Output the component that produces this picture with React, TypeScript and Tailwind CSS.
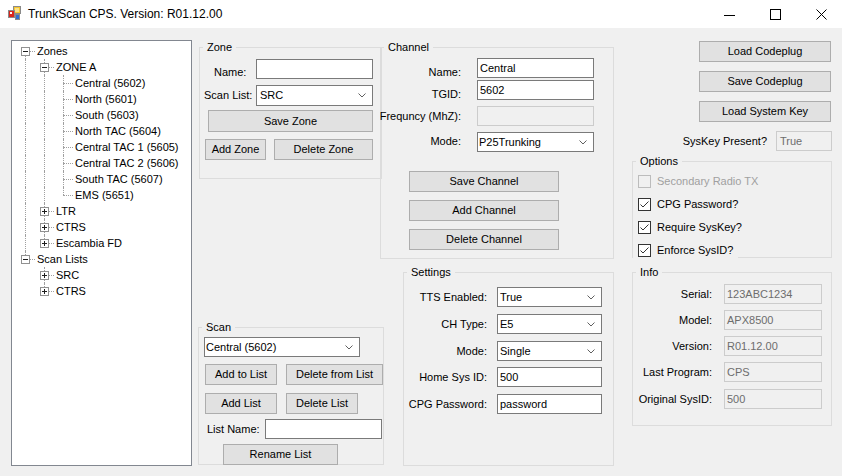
import React from "react";
import clsx from "clsx";

type TreeRow = {
  text: string;
  level: number;
  box?: "+" | "-";
  up: boolean;
  down: boolean;
  pipes: boolean[];
};

const treeRows: TreeRow[] = [
  { text: "Zones", level: 0, box: "-", up: false, down: true, pipes: [] },
  { text: "ZONE A", level: 1, box: "-", up: true, down: true, pipes: [true] },
  { text: "Central (5602)", level: 2, up: true, down: true, pipes: [true, true] },
  { text: "North (5601)", level: 2, up: true, down: true, pipes: [true, true] },
  { text: "South (5603)", level: 2, up: true, down: true, pipes: [true, true] },
  { text: "North TAC (5604)", level: 2, up: true, down: true, pipes: [true, true] },
  { text: "Central TAC 1 (5605)", level: 2, up: true, down: true, pipes: [true, true] },
  { text: "Central TAC 2 (5606)", level: 2, up: true, down: true, pipes: [true, true] },
  { text: "South TAC (5607)", level: 2, up: true, down: true, pipes: [true, true] },
  { text: "EMS (5651)", level: 2, up: true, down: false, pipes: [true, true] },
  { text: "LTR", level: 1, box: "+", up: true, down: true, pipes: [true] },
  { text: "CTRS", level: 1, box: "+", up: true, down: true, pipes: [true] },
  { text: "Escambia FD", level: 1, box: "+", up: true, down: false, pipes: [true] },
  { text: "Scan Lists", level: 0, box: "-", up: true, down: false, pipes: [] },
  { text: "SRC", level: 1, box: "+", up: true, down: true, pipes: [false] },
  { text: "CTRS", level: 1, box: "+", up: true, down: false, pipes: [false] },
];

function TreeLine({ row }: { row: TreeRow }) {
  return (
    <div className="flex h-[16px] items-center">
      {row.pipes.map((p, i) => (
        <div key={i} className="relative h-[16px] w-[19px]">
          {p && <div className="absolute left-[9px] top-0 bottom-0 border-l border-dotted border-[#a0a0a0]" />}
        </div>
      ))}
      <div className="relative h-[16px] w-[19px]">
        {row.up && <div className="absolute left-[9px] top-0 h-[8px] border-l border-dotted border-[#a0a0a0]" />}
        {row.down && <div className="absolute left-[9px] top-[8px] bottom-0 border-l border-dotted border-[#a0a0a0]" />}
        <div className="absolute left-[9px] right-0 top-[8px] border-t border-dotted border-[#a0a0a0]" />
        {row.box && (
          <div className="absolute left-[5px] top-[4px] flex h-[9px] w-[9px] items-center justify-center border border-[#919191] bg-white">
            <svg width="7" height="7" viewBox="0 0 7 7">
              <path d="M1 3.5H6" stroke="#1e1e1e" strokeWidth="1" />
              {row.box === "+" && <path d="M3.5 1V6" stroke="#1e1e1e" strokeWidth="1" />}
            </svg>
          </div>
        )}
      </div>
      <span className="ml-[2px] whitespace-nowrap leading-[16px]">{row.text}</span>
    </div>
  );
}

function Btn({ children, className }: { children: React.ReactNode; className?: string }) {
  return (
    <button
      type="button"
      className={clsx(
        "flex shrink-0 items-center justify-center whitespace-nowrap border border-[#adadad] bg-[#e1e1e1] leading-none text-black",
        className
      )}
    >
      {children}
    </button>
  );
}

function TextBox({ value, className, disabled }: { value?: string; className?: string; disabled?: boolean }) {
  return (
    <div
      className={clsx(
        "flex h-[20px] shrink-0 items-center border pl-[2px] leading-none",
        disabled ? "border-[#cccccc] bg-[#f0f0f0] text-[#6d6d6d]" : "border-[#7a7a7a] bg-white text-black",
        className
      )}
    >
      {value}
    </div>
  );
}

function Combo({ value, className }: { value: string; className?: string }) {
  return (
    <div
      className={clsx(
        "flex h-[20px] shrink-0 items-center border border-[#7a7a7a] bg-white leading-none text-black",
        className
      )}
    >
      <span>{value}</span>
      <svg className="ml-auto mr-[6px]" width="8" height="5" viewBox="0 0 8 5">
        <path d="M0.5 0.5L4 4L7.5 0.5" fill="none" stroke="#606060" strokeWidth="1" />
      </svg>
    </div>
  );
}

function Group({ title, className, children }: { title: string; className?: string; children: React.ReactNode }) {
  return (
    <fieldset className={clsx("shrink-0 border border-[#dcdcdc]", className)}>
      <legend className="ml-[3px] px-[4px] leading-[13px]">{title}</legend>
      {children}
    </fieldset>
  );
}

function Check({ label, checked, disabled, className }: { label: string; checked?: boolean; disabled?: boolean; className?: string }) {
  return (
    <div className={clsx("flex h-[23px] w-fit items-center bg-[#f0f0f0] pl-[5px] pr-[5px]", className)}>
      <div
        className={clsx(
          "flex h-[13px] w-[13px] items-center justify-center border",
          disabled ? "border-[#bcbcbc] bg-[#f0f0f0]" : "border-[#333333] bg-white"
        )}
      >
        {checked && (
          <svg width="11" height="11" viewBox="0 0 11 11">
            <path d="M1.5 5.5L4 8L9.5 2.5" fill="none" stroke="#333333" strokeWidth="1" />
          </svg>
        )}
      </div>
      <span className={clsx("ml-[6px] whitespace-nowrap", disabled ? "text-[#a0a0a0]" : "text-black")}>{label}</span>
    </div>
  );
}

function AppIcon() {
  return (
    <svg width="16" height="16" viewBox="0 0 16 16">
      <rect x="6.5" y="0.5" width="7" height="7" fill="#f7c62f" stroke="#8a8a8a" />
      <rect x="8" y="2" width="4" height="4" fill="#fbe38a" />
      <rect x="1.5" y="4.5" width="6" height="7" fill="#d9261c" stroke="#8a8a8a" />
      <rect x="3" y="6" width="2" height="2" fill="#ffffff" />
      <rect x="8.5" y="8.5" width="4" height="5" fill="#2f6fd0" stroke="#8a8a8a" />
    </svg>
  );
}

// channel form labels sit a little lower than their fields, like the designer placed them
const channelFields = [
  { l: "Name:", v: "Central", kind: "text", mt: "mt-[4px]", lmt: "mt-[8px]" },
  { l: "TGID:", v: "5602", kind: "text", mt: "mt-[2px]", lmt: "mt-[8px]" },
  { l: "Frequncy (MhZ):", v: "", kind: "disabled", mt: "mt-[6px]", lmt: "mt-[4px]" },
  { l: "Mode:", v: "P25Trunking", kind: "combo", mt: "mt-[6px]", lmt: "mt-[3px]" },
];

export default function App() {
  return (
    <div className="h-[476px] w-[842px] overflow-hidden bg-[#f0f0f0] font-['Liberation_Sans',Arial,sans-serif] text-[11px] text-black">
      {/* title bar */}
      <div className="flex h-[28px] items-center bg-white">
        <div className="ml-[7px] flex h-[16px] w-[16px] items-center">
          <AppIcon />
        </div>
        <span className="ml-[5px] text-[12px] leading-none">TrunkScan CPS. Version: R01.12.00</span>
        <div className="-mr-[2px] ml-auto flex h-full">
          <div className="flex w-[46px] items-center justify-center">
            <svg width="11" height="11" viewBox="0 0 11 11">
              <path d="M0 6.5H11" stroke="#000" strokeWidth="1" />
            </svg>
          </div>
          <div className="flex w-[46px] items-center justify-center">
            <svg width="11" height="11" viewBox="0 0 11 11">
              <rect x="0.5" y="0.5" width="10" height="10" fill="none" stroke="#000" strokeWidth="1" />
            </svg>
          </div>
          <div className="flex w-[46px] items-center justify-center">
            <svg width="11" height="11" viewBox="0 0 11 11">
              <path d="M0.5 0.5L10.5 10.5M10.5 0.5L0.5 10.5" stroke="#000" strokeWidth="1" />
            </svg>
          </div>
        </div>
      </div>

      {/* form body */}
      <div className="flex h-[448px] pl-[11px]">
        {/* tree view */}
        <div className="mt-[12px] h-[426px] w-[181px] shrink-0 border border-[#828790] bg-white pl-[4px] pt-[2px]">
          {treeRows.map((r, i) => (
            <TreeLine key={i} row={r} />
          ))}
        </div>

        {/* zone + scan */}
        <div className="ml-[6px] flex w-[186px] shrink-0 flex-col pt-[13px]">
          <Group title="Zone" className="ml-[1px] h-[138px] w-[183px]">
            <div className="mt-[5px] flex h-[20px] items-start">
              <span className="ml-[14px] mt-[7px] leading-[13px]">Name:</span>
              <TextBox className="ml-auto mr-[8px] w-[117px]" />
            </div>
            <div className="mt-[6px] flex h-[21px] items-center">
              <span className="ml-[4px]">Scan List:</span>
              <Combo value="SRC" className="ml-auto mr-[8px] h-[21px] w-[117px] pl-[3px]" />
            </div>
            <Btn className="ml-[8px] mt-[4px] h-[22px] w-[165px]">Save Zone</Btn>
            <div className="mt-[7px] flex h-[21px]">
              <Btn className="ml-[5px] h-[21px] w-[61px]">Add Zone</Btn>
              <Btn className="ml-[8px] h-[21px] w-[99px]">Delete Zone</Btn>
            </div>
          </Group>

          <Group title="Scan" className="mt-[142px] h-[144px] w-[186px]">
            <Combo value="Central (5602)" className="ml-[5px] mt-[3px] w-[156px] pl-[1px]" />
            <div className="mt-[7px] flex h-[21px]">
              <Btn className="ml-[6px] h-[21px] w-[72px]">Add to List</Btn>
              <Btn className="ml-[9px] h-[21px] w-[97px]">Delete from List</Btn>
            </div>
            <div className="mt-[8px] flex h-[21px]">
              <Btn className="ml-[6px] h-[21px] w-[72px]">Add List</Btn>
              <Btn className="ml-[9px] h-[21px] w-[72px]">Delete List</Btn>
            </div>
            <div className="mt-[5px] flex h-[20px] items-center">
              <span className="ml-[8px]">List Name:</span>
              <TextBox className="ml-auto mr-[1px] w-[117px]" />
            </div>
            <Btn className="ml-[24px] mt-[5px] h-[21px] w-[115px]">Rename List</Btn>
          </Group>
        </div>

        {/* channel + settings */}
        <div className="-ml-[4px] flex w-[234px] shrink-0 flex-col pt-[13px]">
          <Group title="Channel" className="h-[218px] w-[234px]">
            {channelFields.map((f) => (
              <div key={f.l} className={clsx("flex h-[20px] items-start", f.mt)}>
                <span className={clsx("flex w-[80px] justify-end whitespace-nowrap leading-[13px]", f.lmt)}>{f.l}</span>
                {f.kind === "combo" ? (
                  <Combo value={f.v} className="ml-[16px] w-[117px] pl-[1px]" />
                ) : (
                  <TextBox value={f.v} disabled={f.kind === "disabled"} className="ml-[16px] w-[117px] pl-[1px]" />
                )}
              </div>
            ))}
            <Btn className="ml-[28px] mt-[19px] h-[21px] w-[150px]">Save Channel</Btn>
            <Btn className="ml-[28px] mt-[8px] h-[21px] w-[150px]">Add Channel</Btn>
            <Btn className="ml-[28px] mt-[8px] h-[21px] w-[150px]">Delete Channel</Btn>
          </Group>

          <Group title="Settings" className="ml-[23px] mt-[7px] h-[200px] w-[211px]">
            {[
              { l: "TTS Enabled:", v: "True", combo: true, mt: "mt-[8px]" },
              { l: "CH Type:", v: "E5", combo: true, mt: "mt-[7px]" },
              { l: "Mode:", v: "Single", combo: true, mt: "mt-[7px]" },
              { l: "Home Sys ID:", v: "500", combo: false, mt: "mt-[6px]" },
              { l: "CPG Password:", v: "password", combo: false, mt: "mt-[7px]" },
            ].map((r) => (
              <div key={r.l} className={clsx("flex h-[20px] items-center", r.mt)}>
                <span className="flex w-[83px] justify-end whitespace-nowrap">{r.l}</span>
                {r.combo ? (
                  <Combo value={r.v} className="ml-[10px] w-[105px] pl-[2px]" />
                ) : (
                  <TextBox value={r.v} className="ml-[10px] w-[105px] pl-[2px]" />
                )}
              </div>
            ))}
          </Group>
        </div>

        {/* right column */}
        <div className="ml-[18px] flex w-[200px] shrink-0 flex-col pt-[13px]">
          <Btn className="ml-[67px] h-[21px] w-[132px]">Load Codeplug</Btn>
          <Btn className="ml-[67px] mt-[9px] h-[21px] w-[132px]">Save Codeplug</Btn>
          <Btn className="ml-[67px] mt-[9px] h-[21px] w-[132px]">Load System Key</Btn>
          <div className="mt-[9px] flex h-[20px] items-center justify-end">
            <span>SysKey Present?</span>
            <TextBox value="True" disabled className="ml-[9px] w-[56px] pl-[3px]" />
          </div>

          <Group title="Options" className="mt-[4px] h-[103px] w-[200px]">
            <Check label="Secondary Radio TX" disabled className="mt-[2px]" />
            <Check label="CPG Password?" checked />
            <Check label="Require SysKey?" checked />
            <Check label="Enforce SysID?" checked />
          </Group>

          <Group title="Info" className="mt-[8px] h-[160px] w-[200px]">
            {[
              { l: "Serial:", v: "123ABC1234", mt: "mt-[5px]" },
              { l: "Model:", v: "APX8500", mt: "mt-[6px]" },
              { l: "Version:", v: "R01.12.00", mt: "mt-[6px]" },
              { l: "Last Program:", v: "CPS", mt: "mt-[6px]" },
              { l: "Original SysID:", v: "500", mt: "mt-[7px]" },
            ].map((r) => (
              <div key={r.l} className={clsx("flex h-[20px] items-center", r.mt)}>
                <span className="flex w-[79px] justify-end whitespace-nowrap">{r.l}</span>
                <TextBox value={r.v} disabled className="ml-[12px] w-[98px]" />
              </div>
            ))}
          </Group>
        </div>
      </div>
    </div>
  );
}
